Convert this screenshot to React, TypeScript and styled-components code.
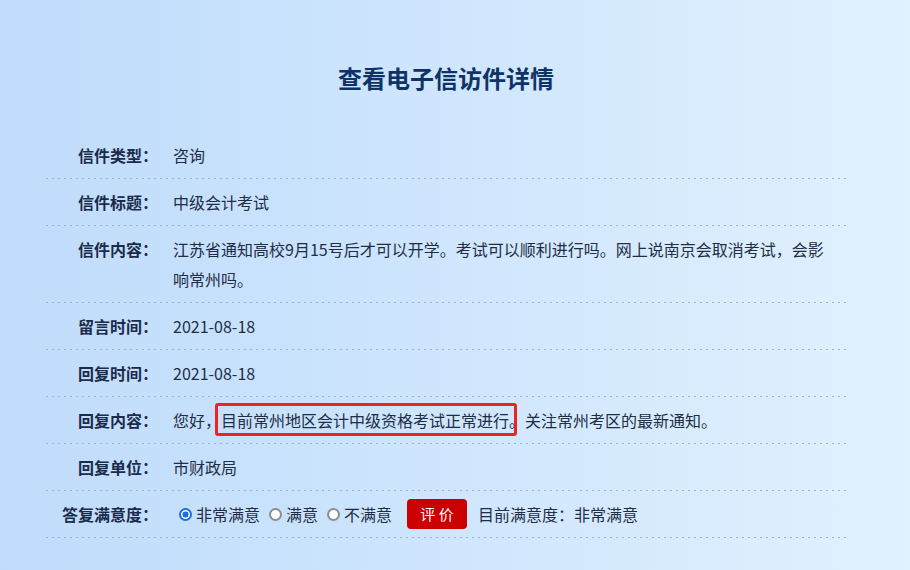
import React from "react";
import styled, { createGlobalStyle } from "styled-components";

const Global = createGlobalStyle`
  html, body { margin: 0; padding: 0; }
  body {
    width: 910px;
    height: 570px;
    overflow: hidden;
    background: linear-gradient(to right, #bfdcfb 0%, #cfe6fd 50%, #e1f1fe 100%);
    font-family: "Microsoft YaHei", "Noto Sans CJK SC", sans-serif;
  }
`;

const Page = styled.div`
  width: 892px;
  padding-top: 62px;
  box-sizing: border-box;
`;

const Title = styled.h1`
  margin: 0 0 38px;
  text-align: center;
  font-size: 24px;
  line-height: 32px;
  font-weight: 700;
  color: #0f3366;
`;

const Table = styled.div`
  width: 800px;
  margin: 0 auto;
`;

const Row = styled.div`
  display: grid;
  grid-template-columns: 112px 1fr;
  column-gap: 15px;
  padding: 8px 0 9px;
  background: linear-gradient(to right, #9fb3c8 2px, transparent 2px) left bottom / 6px 1px repeat-x;
`;

const Label = styled.div`
  text-align: right;
  font-size: 16px;
  line-height: 30px;
  font-weight: 700;
  color: #1b2b4b;
  white-space: nowrap;
`;

const Value = styled.div<{ $controls?: boolean }>`
  font-size: 16px;
  line-height: 30px;
  color: #1f2d45;
  padding-right: 12px;
  display: ${(p) => (p.$controls ? "flex" : "block")};
  align-items: center;
`;

const Text = styled.span``;

const Marked = styled.span`
  position: relative;
  display: inline-block;
  &::after {
    content: "";
    position: absolute;
    left: -6px;
    right: 8px;
    top: -2px;
    bottom: -1px;
    border: 3px solid #ea2420;
    border-radius: 3px;
    pointer-events: none;
  }
`;

const Options = styled.div`
  display: flex;
  align-items: center;
  margin-left: 6px;
`;

const Option = styled.label`
  display: flex;
  align-items: center;
  gap: 4px;
  margin-right: 9px;
  cursor: pointer;
`;

const Radio = styled.span<{ $checked?: boolean }>`
  width: 13px;
  height: 13px;
  box-sizing: border-box;
  border-radius: 50%;
  border: 2px solid ${(p) => (p.$checked ? "#1a6fe0" : "#8b8b92")};
  background: ${(p) =>
    p.$checked
      ? "radial-gradient(circle, #1a6fe0 0 2.8px, #ffffff 3.3px)"
      : "#ffffff"};
`;

const Button = styled.button`
  width: 60px;
  height: 30px;
  margin-left: 6px;
  margin-right: 11px;
  border: none;
  border-radius: 4px;
  background: #cc0000;
  color: #ffffff;
  font-family: "Microsoft YaHei", "Noto Sans CJK SC", sans-serif;
  font-size: 15px;
  line-height: 30px;
  padding: 0;
  cursor: pointer;
`;

const rows: { label: string; value: string }[] = [
  { label: "信件类型：", value: "咨询" },
  { label: "信件标题：", value: "中级会计考试" },
  {
    label: "信件内容：",
    value:
      "江苏省通知高校9月15号后才可以开学。考试可以顺利进行吗。网上说南京会取消考试，会影响常州吗。",
  },
  { label: "留言时间：", value: "2021-08-18" },
  { label: "回复时间：", value: "2021-08-18" },
];

export default function App() {
  return (
    <>
      <Global />
      <Page>
        <Title>查看电子信访件详情</Title>
        <Table>
          {rows.map((r) => (
            <Row key={r.label}>
              <Label>{r.label}</Label>
              <Value>{r.value}</Value>
            </Row>
          ))}
          <Row>
            <Label>回复内容：</Label>
            <Value>
              <Text>您好，</Text>
              <Marked>目前常州地区会计中级资格考试正常进行。</Marked>
              <Text>关注常州考区的最新通知。</Text>
            </Value>
          </Row>
          <Row>
            <Label>回复单位：</Label>
            <Value>市财政局</Value>
          </Row>
          <Row>
            <Label>答复满意度：</Label>
            <Value $controls>
              <Options>
                <Option>
                  <Radio $checked />
                  非常满意
                </Option>
                <Option>
                  <Radio />
                  满意
                </Option>
                <Option>
                  <Radio />
                  不满意
                </Option>
              </Options>
              <Button>评 价</Button>
              <Text>目前满意度：非常满意</Text>
            </Value>
          </Row>
        </Table>
      </Page>
    </>
  );
}
